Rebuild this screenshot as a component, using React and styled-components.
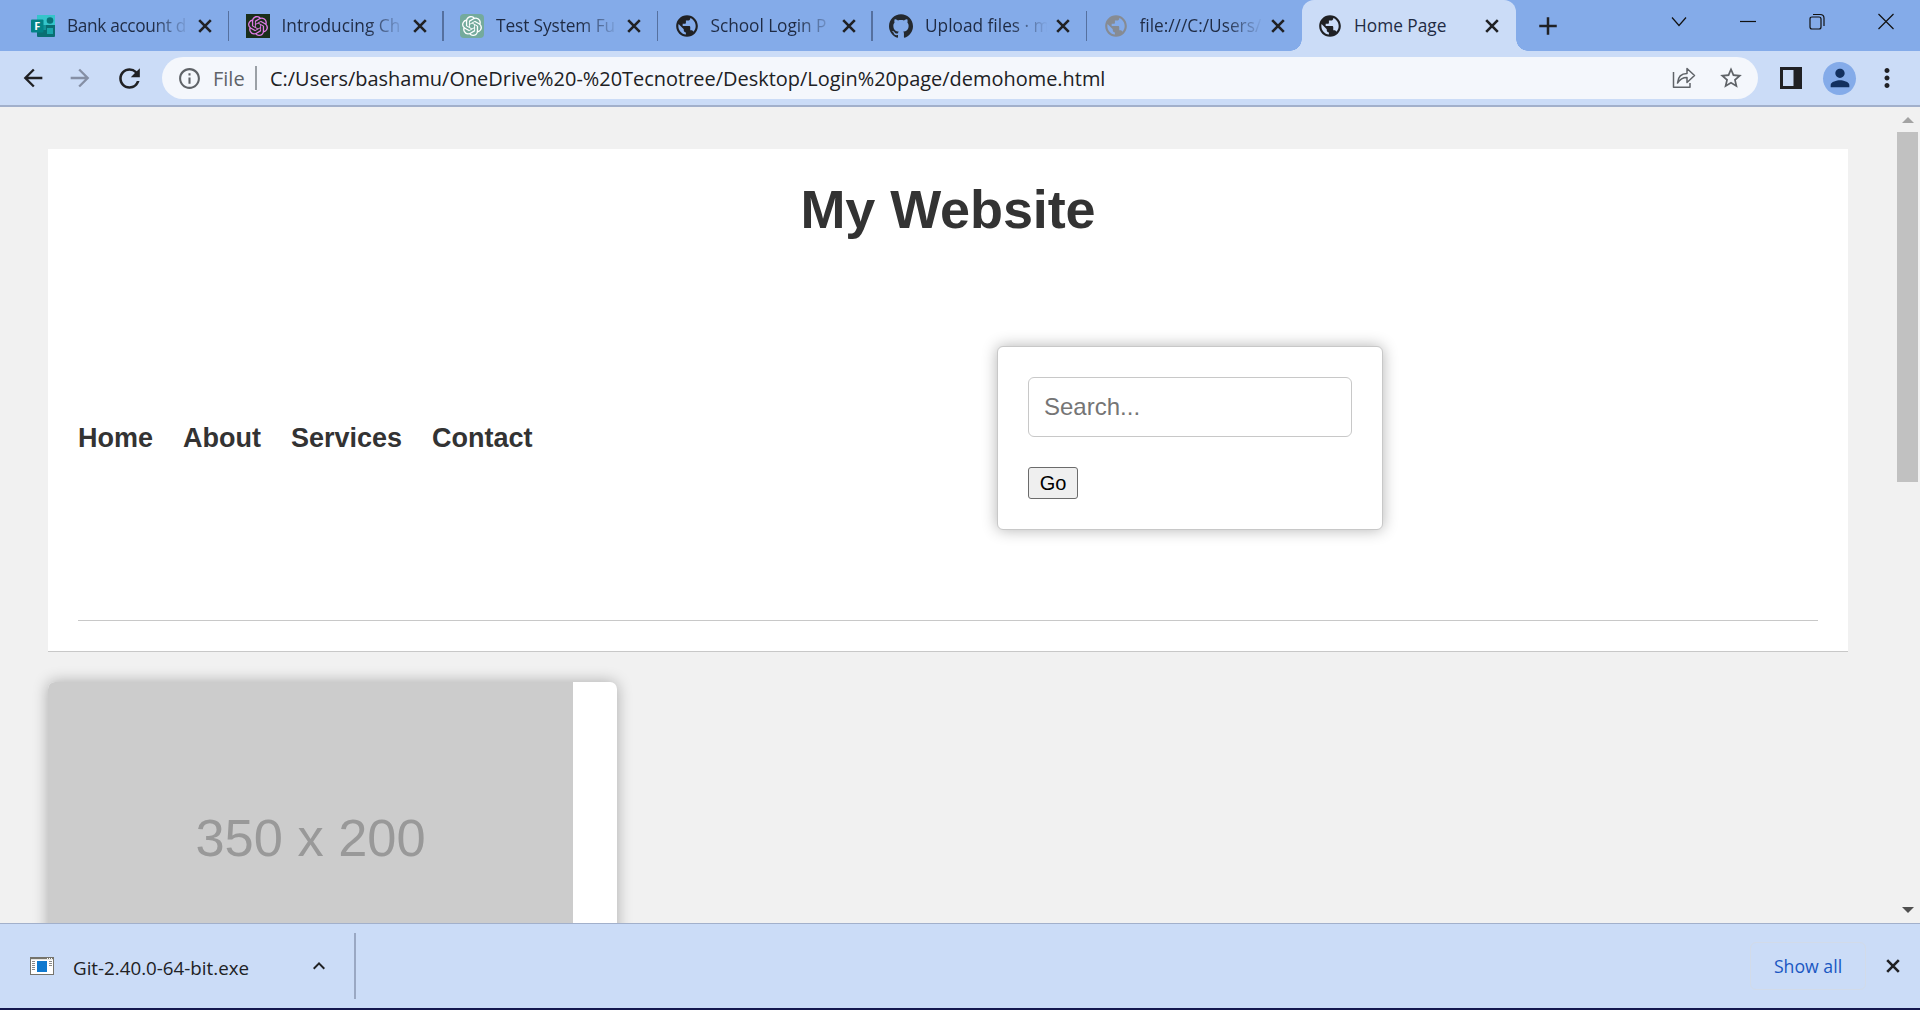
import React from "react";
import styled, { createGlobalStyle } from "styled-components";
import { SiOpenai, SiGithub } from "react-icons/si";
import { MdPublic, MdArrowBack, MdArrowForward, MdRefresh, MdInfoOutline, MdStarBorder, MdPerson, MdMoreVert, MdAdd, MdExpandLess } from "react-icons/md";

const Global = createGlobalStyle`
  * { box-sizing: border-box; }
  body { margin: 0; overflow: hidden; background: #f1f1f1; }
`;

const ui = `"Open Sans", "Noto Sans", sans-serif`;
const arial = `"Liberation Sans", Arial, sans-serif`;

const Window = styled.div`
  width: 1920px; height: 1010px; display: flex; flex-direction: column;
  overflow: hidden; font-family: ${ui}; color: #202124;
  svg { display: block; flex: none; }
`;

const TabStrip = styled.div`
  height: 51px; background: #84abe9; display: flex; flex: none; padding-left: 14.5px;
`;
const TabItem = styled.div`
  width: 214.5px; height: 51px; display: flex; align-items: center; padding-left: 16.5px;
  position: relative; flex: none;
  background: ${p => (p.$active ? "#cbdcf7" : "transparent")};
  border-radius: 12px 12px 0 0;
  &::before, &::after {
    content: ""; position: absolute; bottom: 0; width: 12px; height: 12px;
    display: ${p => (p.$active ? "block" : "none")};
  }
  &::before { left: -12px; background: radial-gradient(circle at 0 0, transparent 11.5px, #cbdcf7 12px); }
  &::after { right: -12px; background: radial-gradient(circle at 100% 0, transparent 11.5px, #cbdcf7 12px); }
`;
const Favicon = styled.div`
  width: 24px; height: 24px; flex: none; display: flex; align-items: center; justify-content: center;
  background: ${p => p.$bg || "transparent"}; border-radius: ${p => p.$radius || 0}px;
  color: ${p => p.$color || "#202124"};
`;
const TabTitle = styled.div`
  margin-left: 12px; width: 122px; height: 30px; line-height: 30px; white-space: nowrap;
  font-size: 17.3px; letter-spacing: ${p => p.$ls || 0}px; margin-right: 9px;
  color: #1f2b44;
  mask-image: ${p => (p.$fade ? "linear-gradient(to right, #000 85px, transparent 123px)" : "none")};
`;
const Divider = styled.div`
  width: 1.5px; height: 30px; background: #55709f; margin-left: 15.500px; flex: none;
`;
const NewTab = styled.div`margin: 11px 0 0 17px; height: 30px;`;
const Controls = styled.div`
  margin-left: auto; display: flex; gap: 53px; padding: 13px 26.500px 0 0;
`;

const Toolbar = styled.div`
  height: 56px; background: #cbdcf7; border-bottom: 2px solid #a2b0cb; flex: none;
  display: flex; align-items: center; padding-left: 18.500px;
`;
const NavIcons = styled.div`display: flex; gap: 19.700px; width: 143.500px; align-items: center;`;
const Omnibox = styled.div`
  width: 1596px; height: 42px; border-radius: 21px; background: #f4f7fc; display: flex; align-items: center;
  padding: 0 14px 0 15px; color: #5f6368;
`;
const Scheme = styled.span`margin-left: 11px; width: 42px; font-size: 20px;`;
const UrlBar = styled.div`width: 1.5px; height: 24px; background: #9aa0a6;`;
const Url = styled.span`
  margin-left: 13.5px; color: #202124; flex: 1; white-space: nowrap; font-size: 19.96px;
`;
const OmniIcons = styled.div`display: flex; gap: 22px; align-items: center;`;
const ToolIcons = styled.div`display: flex; align-items: center; margin-left: 22px;`;
const Avatar = styled.div`
  width: 33px; height: 33px; border-radius: 50%; background: #84abe9; margin: 0 16px 0 21px;
  display: flex; align-items: center; justify-content: center; color: #12305f;
`;

const Viewport = styled.div`height: 816px; display: flex; background: #f1f1f1; flex: none; overflow: hidden;`;
const Page = styled.div`width: 1897px; padding: 42px 49px 0 48px; overflow: hidden; font-family: ${arial};`;
const Header = styled.header`
  height: 503px; background: #fff; border-bottom: 1px solid #c8c8c8; padding: 30px; color: #333;
`;
const Title = styled.h1`margin: 0; font-size: 54px; line-height: 60px; text-align: center; letter-spacing: -0.1px;`;
const NavRow = styled.div`
  display: flex; align-items: center; height: 382px; border-bottom: 1px solid #c8c8c8; padding-top: 17px;
`;
const NavLinks = styled.nav`display: flex; gap: 30px; width: 919px; font-size: 27px; font-weight: bold; line-height: 30px;`;
const SearchBox = styled.form`
  width: 386px; height: 184px; border: 1px solid #c8c8c8; border-radius: 6px; padding: 30px; background: #fff;
  box-shadow: 0 0 15px rgba(0, 0, 0, 0.3);
`;
const Input = styled.input`
  display: block; width: 324px; height: 60px; border: 1px solid #c8c8c8; border-radius: 6px; padding: 0 15px;
  font: 24px ${arial}; margin: 0 0 30px; outline: none;
  &::placeholder { color: #757575; }
`;
const Go = styled.button`
  display: block; width: 50px; height: 32px; border: 1px solid #6b6b6b; border-radius: 3px; background: #efefef;
  font: 20px ${arial}; padding: 0; color: #000;
`;
const Card = styled.div`
  margin-top: 30px; width: 569px; height: 500px; background: #fff; border-radius: 7px; overflow: hidden;
  box-shadow: 0 0 15px rgba(0, 0, 0, 0.3);
`;
const Placeholder = styled.div`
  width: 525px; height: 312px; background: #ccc; color: #999; font-size: 52.4px; display: flex;
  align-items: center; justify-content: center;
`;

const Scrollbar = styled.div`
  width: 23px; display: flex; flex-direction: column; align-items: flex-start; padding: 10px 0;
  background: #f1f1f1;
`;
const Arrow = styled.div`
  margin-left: 5px; width: 0; height: 0; border: 6px solid transparent;
  ${p => (p.$up ? "border-top: 0; border-bottom-color: #a3a3a3;" : "border-bottom: 0; border-top-color: #505050; margin-top: auto;")}
`;
const Thumb = styled.div`width: 21px; height: 350px; background: #c1c1c1; margin-top: 9px;`;

const Shelf = styled.div`
  height: 85px; border-top: 1px solid #a2b0cb; background: #cbdcf7; display: flex; align-items: center;
  padding: 0 20px 1px 30px; flex: none;
`;
const FileName = styled.span`font-size: 18.75px; width: 234px; margin: 3px 0 0 19px; white-space: nowrap;`;
const ShelfDivider = styled.div`width: 2px; height: 66px; background: #9aa8c3; margin: 1px 0 0 23px;`;
const ShowAll = styled.button`
  margin-left: auto; width: 116px; height: 48px; border: 1px solid #d2dbe9; border-radius: 6px; background: none;
  color: #1a57c2; font: 500 17.7px ${ui}; padding: 0; margin-right: 20px; white-space: nowrap;
`;
const Taskbar = styled.div`flex: 1; background: #14184f;`;

const FormsIcon = () => (
  <svg width="24" height="22" viewBox="0 0 24 22">
    <rect x="6" width="18" height="22" rx="1" fill="#0a6f73" />
    <rect x="6" width="18" height="10" fill="#35c5cb" />
    <rect x="6" y="10" width="9" height="5" fill="#13949a" />
    <circle cx="19" cy="5.5" r="3.3" fill="#087579" />
    <rect x="16" y="13" width="6" height="6" fill="#1aa6ab" />
    <rect y="4.500" width="12.500" height="13" rx="1" fill="#038387" />
    <text x="3.300" y="15" fontSize="11" fontWeight="700" fontFamily="Open Sans" fill="#fff">F</text>
  </svg>
);
const ShareIcon = () => (
  <svg width="24" height="24" viewBox="0 0 24 24" fill="none" stroke="#5f6368" strokeWidth="1.500" strokeLinejoin="round">
    <path d="M1.500 6V21.300H18V17" />
    <path d="M5.500 17C6 11 9 7.500 15 7.500V2.500L22.500 9.500L15 16.500V11.500C10.500 11.500 8 13 5.500 17Z" />
  </svg>
);
const PanelIcon = () => (
  <svg width="22" height="22" viewBox="0 0 22 22">
    <rect x="1.500" y="1.500" width="19" height="19" fill="none" stroke="#202124" strokeWidth="3" />
    <rect x="13.500" y="1" width="7" height="20" fill="#202124" />
  </svg>
);
const ExeIcon = () => (
  <svg width="24" height="18" viewBox="0 0 24 18">
    <rect x=".5" y=".5" width="23" height="17" fill="#fff" stroke="#76746c" />
    <path d="M0 1.200H24" stroke="#76746c" strokeWidth="2" />
    <rect x="7" y="4" width="10" height="11" fill="#1079cf" />
    <path d="M2 4.500h3M2 6.500h3M2 8.500h3M2 10.500h3M2 12.500h3M19 4.500h3M19 6.500h3M19 8.500h3" stroke="#8a8a8a" />
    <path d="M17 1.500h1M19 1.500h1M21 1.500h1" stroke="#fff" />
  </svg>
);
const Cross = ({ size = 14 }) => (
  <svg width={size} height={size} viewBox="0 0 14 14" stroke="#202124" strokeWidth="2.600">
    <path d="M1.200 1.200L12.800 12.800M12.800 1.200L1.200 12.800" />
  </svg>
);
const WindowIcon = ({ d }) => (
  <svg width="16" height="17" viewBox="0 0 16 17" fill="none" stroke="#111" strokeWidth="1.200"><path d={d} /></svg>
);

const tabs = [
  { title: "Bank account d", icon: <FormsIcon />, ls: -0.35 },
  { title: "Introducing Ch", icon: <SiOpenai size={20} />, bg: "#1a2e1a", color: "#e07be6" },
  { title: "Test System Fu", icon: <SiOpenai size={20} />, bg: "#74aa9c", color: "#fff", radius: 4, ls: -0.1 },
  { title: "School Login P", icon: <MdPublic size={26} />, ls: -0.05 },
  { title: "Upload files · m", icon: <SiGithub size={24} />, color: "#24292f" },
  { title: "file:///C:/Users/", icon: <MdPublic size={26} />, color: "#868b93" },
  { title: "Home Page", icon: <MdPublic size={26} />, active: true },
];

export default function App() {
  return (
    <Window>
      <Global />
      <TabStrip>
        {tabs.map((t, i) => (
          <TabItem key={t.title} $active={t.active}>
            <Favicon $bg={t.bg} $color={t.color} $radius={t.radius}>{t.icon}</Favicon>
            <TabTitle $fade={!t.active} $ls={t.ls}>{t.title}</TabTitle>
            <Cross />
            {i < 5 && <Divider />}
          </TabItem>
        ))}
        <NewTab><MdAdd size={30} /></NewTab>
        <Controls>
          <WindowIcon d="M1 4.500L8 12.500L15 4.500" />
          <WindowIcon d="M0 8.500H16" />
          <WindowIcon d="M1 6Q1 4 3 4H10Q12 4 12 6V14Q12 16 10 16H3Q1 16 1 14ZM4 1.500H11Q15 1.500 15 5V13" />
          <WindowIcon d="M.5 1L15.500 16M15.500 1L.5 16" />
        </Controls>
      </TabStrip>
      <Toolbar>
        <NavIcons>
          <MdArrowBack size={28} />
          <MdArrowForward size={28} color="#858fa5" />
          <MdRefresh size={31} />
        </NavIcons>
        <Omnibox>
          <MdInfoOutline size={25} />
          <Scheme>File</Scheme>
          <UrlBar />
          <Url>C:/Users/bashamu/OneDrive%20-%20Tecnotree/Desktop/Login%20page/demohome.html</Url>
          <OmniIcons><ShareIcon /><MdStarBorder size={26} /></OmniIcons>
        </Omnibox>
        <ToolIcons>
          <PanelIcon />
          <Avatar><MdPerson size={28} /></Avatar>
          <MdMoreVert size={30} />
        </ToolIcons>
      </Toolbar>
      <Viewport>
        <Page>
          <Header>
            <Title>My Website</Title>
            <NavRow>
              <NavLinks><span>Home</span><span>About</span><span>Services</span><span>Contact</span></NavLinks>
              <SearchBox>
                <Input placeholder="Search..." />
                <Go type="button">Go</Go>
              </SearchBox>
            </NavRow>
          </Header>
          <Card><Placeholder>350 x 200</Placeholder></Card>
        </Page>
        <Scrollbar><Arrow $up /><Thumb /><Arrow /></Scrollbar>
      </Viewport>
      <Shelf>
        <ExeIcon />
        <FileName>Git-2.40.0-64-bit.exe</FileName>
        <MdExpandLess size={24} />
        <ShelfDivider />
        <ShowAll>Show all</ShowAll>
        <Cross />
      </Shelf>
      <Taskbar />
    </Window>
  );
}
